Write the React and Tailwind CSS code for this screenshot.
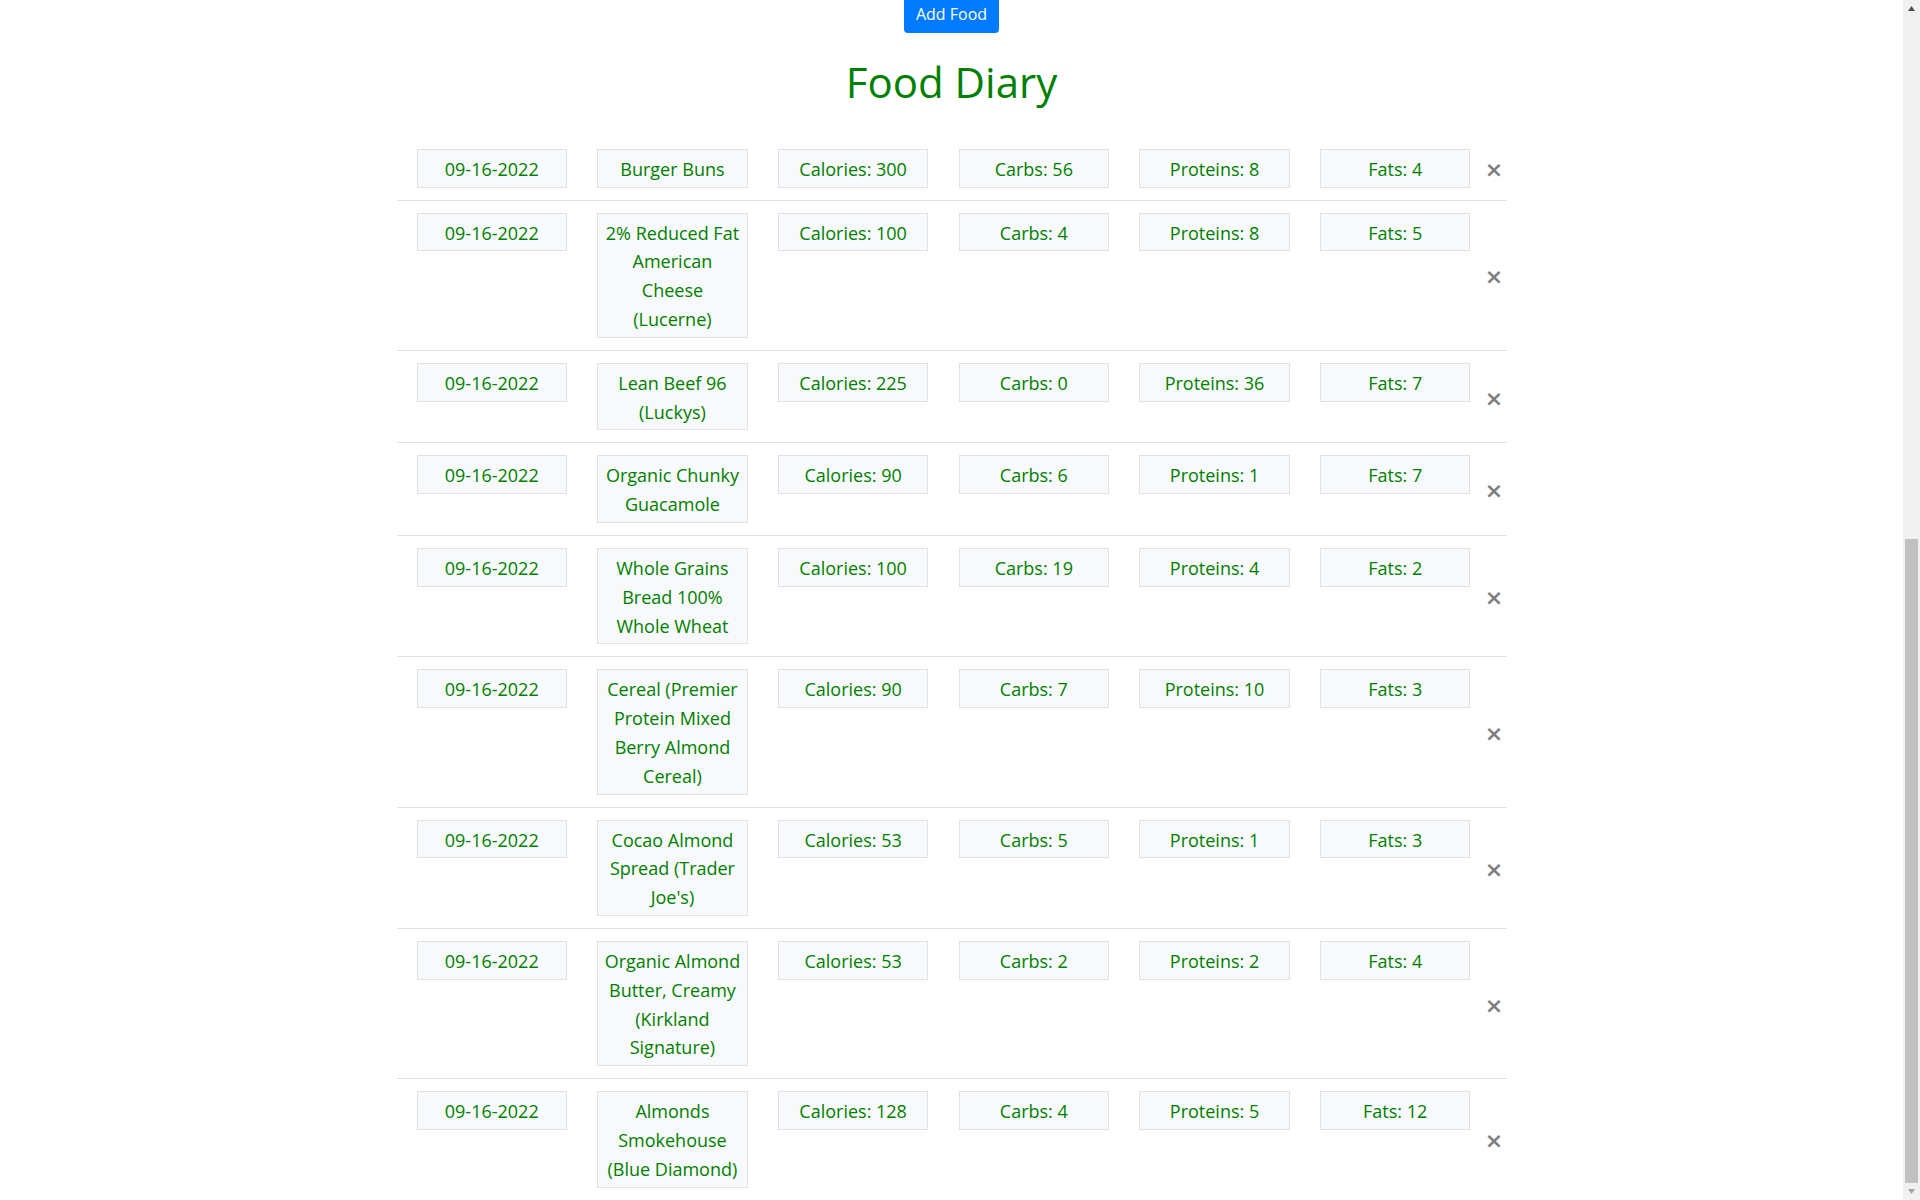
import React from 'react'

const entries = [
    { date: '09-16-2022', name: 'Burger Buns', calories: 300, carbs: 56, proteins: 8, fats: 4 },
    { date: '09-16-2022', name: '2% Reduced Fat\nAmerican\nCheese\n(Lucerne)', calories: 100, carbs: 4, proteins: 8, fats: 5 },
    { date: '09-16-2022', name: 'Lean Beef 96\n(Luckys)', calories: 225, carbs: 0, proteins: 36, fats: 7 },
    { date: '09-16-2022', name: 'Organic Chunky\nGuacamole', calories: 90, carbs: 6, proteins: 1, fats: 7 },
    { date: '09-16-2022', name: 'Whole Grains\nBread 100%\nWhole Wheat', calories: 100, carbs: 19, proteins: 4, fats: 2 },
    { date: '09-16-2022', name: 'Cereal (Premier\nProtein Mixed\nBerry Almond\nCereal)', calories: 90, carbs: 7, proteins: 10, fats: 3 },
    { date: '09-16-2022', name: 'Cocao Almond\nSpread (Trader\nJoe\'s)', calories: 53, carbs: 5, proteins: 1, fats: 3 },
    { date: '09-16-2022', name: 'Organic Almond\nButter, Creamy\n(Kirkland\nSignature)', calories: 53, carbs: 2, proteins: 2, fats: 4 },
    { date: '09-16-2022', name: 'Almonds\nSmokehouse\n(Blue Diamond)', calories: 128, carbs: 4, proteins: 5, fats: 12 },
];

const Cell = ({ children }) => (
    <div className="w-[150.5px] shrink-0 border border-[#dee2e6] bg-[#f8f9fa] px-[4px] pt-[5px] pb-[3px] text-center text-[18px] leading-[28.8px] text-[#008000] whitespace-pre-line">
        {children}
    </div>
)

const FoodRow = ({ entry, first }) => (
    <div className={`flex items-start gap-[30.2px] py-3 pl-[20px] ${first ? '' : 'border-t border-[#dee2e6]'}`}>
        <Cell>{entry.date}</Cell>
        <Cell>{entry.name}</Cell>
        <Cell>Calories: {entry.calories}</Cell>
        <Cell>Carbs: {entry.carbs}</Cell>
        <Cell>Proteins: {entry.proteins}</Cell>
        <Cell>Fats: {entry.fats}</Cell>
        <button className="-ml-[16px] self-center pt-[4px] w-[16px] text-center font-['DejaVu_Sans',sans-serif] text-[22px] font-bold leading-none text-black opacity-50">
            ×
        </button>
    </div>
)

// fake window scrollbar, page is scrolled to the bottom in the shot
const Scrollbar = () => (
    <div className="flex w-[17px] shrink-0 flex-col bg-[#f1f1f1]">
        <div className="flex h-[17px] justify-center pt-[6px]">
            <svg width="7" height="5" viewBox="0 0 7 5"><path d="M3.5 0L7 5H0z" fill="#505050" /></svg>
        </div>
        <div className="flex flex-1 flex-col justify-end">
            <div className="mx-[2px] h-[644px] bg-[#c1c1c1]" />
        </div>
        <div className="flex h-[17px] justify-center pt-[6px]">
            <svg width="7" height="5" viewBox="0 0 7 5"><path d="M0 0H7L3.5 5z" fill="#a3a3a3" /></svg>
        </div>
    </div>
)

const App = () => {
    return (
        <div className="flex h-screen overflow-hidden bg-white font-['Open_Sans',sans-serif]">
            <div className="flex-1 overflow-hidden">
                <div className="mx-auto w-full max-w-[1140px] px-[15px]">
                    <div className="flex justify-center">
                        <button className="-mt-[5px] rounded bg-[#007bff] px-3 py-[7px] text-base leading-6 text-white">
                            Add Food
                        </button>
                    </div>
                    <h1 className="mt-[23px] mb-[28px] text-center text-[42px] leading-[52.8px] font-normal text-[#008000]">
                        Food Diary
                    </h1>
                    <div>
                        {entries.map((entry, i) => (
                            <FoodRow key={i} entry={entry} first={i === 0} />
                        ))}
                    </div>
                </div>
            </div>
            <Scrollbar />
        </div>
    )
}

export default App
